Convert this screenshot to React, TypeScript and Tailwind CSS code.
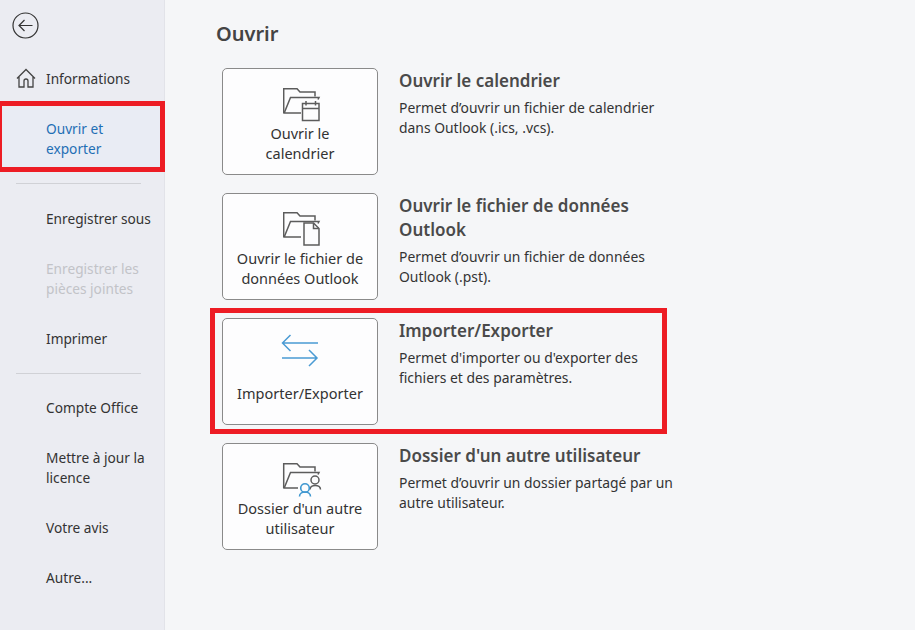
const FONT = "font-['Noto_Sans','Open_Sans',sans-serif]"

function FolderBase({ end = 18 }: { end?: number }) {
  return (
    <>
      <path d="M0.700 25V0.700H14L17 4H32V8.500" fill="none" stroke="#5c5c5c" strokeWidth="1.500" />
      <path d={`M${end} 25H1.200L7.500 9.500H36L35 11.500`} fill="none" stroke="#5c5c5c" strokeWidth="1.500" />
    </>
  )
}

function CalendarIcon() {
  return (
    <svg className="ml-[4px]" width="38" height="34" viewBox="0 0 38 34">
      <FolderBase />
      <rect x="19.500" y="15.500" width="16.500" height="17" fill="#fdfdfe" stroke="#5c5c5c" strokeWidth="1.500" />
      <path d="M19.500 20.500H36M23 13v4.500M32.500 13v4.500" fill="none" stroke="#5c5c5c" strokeWidth="1.500" />
    </svg>
  )
}

function FileIcon() {
  return (
    <svg className="-mt-px ml-[4px]" width="38" height="34" viewBox="0 0 38 34">
      <FolderBase />
      <path d="M21 11H30.500L36 16.500V33H21z" fill="#fdfdfe" stroke="#5c5c5c" strokeWidth="1.500" />
      <path d="M30.500 11V16.500H36" fill="none" stroke="#5c5c5c" strokeWidth="1.500" />
    </svg>
  )
}

function ArrowsIcon() {
  return (
    <svg className="overflow-visible ml-[2px]" width="38" height="34" viewBox="0 0 38 34">
      <path d="M0.500 5H36M8.500 -3L0.500 5L8.500 13" fill="none" stroke="#4a9bd4" strokeWidth="1.500" />
      <path d="M0 20H35M27 12L35 20L27 28" fill="none" stroke="#4a9bd4" strokeWidth="1.500" />
    </svg>
  )
}

function UsersIcon() {
  return (
    <svg className="overflow-visible ml-[4px]" width="38" height="34" viewBox="0 0 38 34">
      <FolderBase end={15} />
      <circle cx="32" cy="17" r="4" fill="#fdfdfe" stroke="#5c5c5c" strokeWidth="1.500" />
      <path d="M27 26.500c0-5.500 10.500-5.500 10.500 0" fill="none" stroke="#5c5c5c" strokeWidth="1.500" />
      <circle cx="22" cy="25" r="4.300" fill="#fdfdfe" stroke="#3f97d0" strokeWidth="1.600" />
      <path d="M16.500 33.500c0-6 11-6 11 0" fill="none" stroke="#3f97d0" strokeWidth="1.600" />
    </svg>
  )
}

function NavItem({ label, active, disabled, icon }: { label: string[]; active?: boolean; disabled?: boolean; icon?: boolean }) {
  const color = active ? "text-[#1f6fb5]" : disabled ? "text-[#c2c3c8]" : "text-[#333333]"
  return (
    <div className={`relative pl-[46px] py-[10px] text-[13.7px] leading-[20px] ${color} ${active ? "bg-[#e9ecf4]" : ""}`}>
      {icon && (
        <svg className="absolute left-[16px] top-[9px]" width="20" height="20" viewBox="0 0 20 20">
          <path d="M1 10.500L10 1.500l9 9M3 8.500V19h5v-6q0-2 2-2t2 2v6h5V8.500" fill="none" stroke="#444444" strokeWidth="1.300" />
        </svg>
      )}
      {label.map((l) => (
        <div key={l}>{l}</div>
      ))}
    </div>
  )
}

function Separator({ bottom }: { bottom: string }) {
  return <div className={`ml-[16px] w-[125px] h-px bg-[#d0d1d6] mt-[14px] ${bottom}`} />
}

function Row({ icon, button, title, desc }: { icon: React.ReactNode; button: string[]; title: string[]; desc: string[] }) {
  return (
    <div className="flex h-[107px]">
      <div className="w-[156px] h-[107px] shrink-0 rounded-[5px] border border-[#8a8a8a] bg-[#fdfdfe] flex flex-col items-center pt-[19px]">
        <div className="h-[34px]">{icon}</div>
        <div className={`text-[14.500px] leading-[20px] text-[#333333] text-center ${button.length === 1 ? "mt-[11px]" : "mt-[1px]"}`}>
          {button.map((b) => (
            <div key={b} className="whitespace-nowrap">{b}</div>
          ))}
        </div>
      </div>
      <div className="ml-[21px] pt-[1px]">
        <div className="text-[17px] leading-[24px] font-semibold text-[#4a4a4a]">
          {title.map((t) => (
            <div key={t}>{t}</div>
          ))}
        </div>
        <div className="mt-[5px] text-[13.900px] leading-[20px] text-[#333333]">
          {desc.map((d) => (
            <div key={d} className="whitespace-nowrap">{d}</div>
          ))}
        </div>
      </div>
    </div>
  )
}

export default function App() {
  return (
    <div className={`relative w-[915px] h-[630px] overflow-hidden flex bg-[#f5f6f8] ${FONT}`}>
      {/* Sidebar */}
      <div className="w-[165px] h-full shrink-0 bg-[#ebecf2] border-r border-[#e2e3e9]">
        <div className="pt-[12px] pl-[12px] h-[59px]">
          <svg width="27" height="27" viewBox="0 0 27 27">
            <circle cx="13.500" cy="13.500" r="12.500" fill="none" stroke="#333333" strokeWidth="1.200" />
            <path d="M20.500 13.500H7M12.500 8l-5.500 5.500 5.500 5.500" fill="none" stroke="#333333" strokeWidth="1.200" />
          </svg>
        </div>
        <div className="flex flex-col gap-[10px]">
          <NavItem label={["Informations"]} icon />
          <NavItem label={["Ouvrir et", "exporter"]} active />
        </div>
        <Separator bottom="mb-[15px]" />
        <div className="flex flex-col gap-[10px]">
          <NavItem label={["Enregistrer sous"]} />
          <NavItem label={["Enregistrer les", "pièces jointes"]} disabled />
          <NavItem label={["Imprimer"]} />
        </div>
        <Separator bottom="mb-[14px]" />
        <div className="flex flex-col gap-[10px]">
          <NavItem label={["Compte Office"]} />
          <NavItem label={["Mettre à jour la", "licence"]} />
          <NavItem label={["Votre avis"]} />
          <NavItem label={["Autre..."]} />
        </div>
      </div>

      {/* Main */}
      <div className="flex-1 pl-[51px]">
        <h1 className="text-[20px] leading-[28px] font-semibold text-[#444444] pt-[20px] h-[68px]">Ouvrir</h1>
        <div className="ml-[6px] flex flex-col gap-[18px]">
          <Row
            icon={<CalendarIcon />}
            button={["Ouvrir le", "calendrier"]}
            title={["Ouvrir le calendrier"]}
            desc={["Permet d’ouvrir un fichier de calendrier", "dans Outlook (.ics, .vcs)."]}
          />
          <Row
            icon={<FileIcon />}
            button={["Ouvrir le fichier de", "données Outlook"]}
            title={["Ouvrir le fichier de données", "Outlook"]}
            desc={["Permet d’ouvrir un fichier de données", "Outlook (.pst)."]}
          />
          <Row
            icon={<ArrowsIcon />}
            button={["Importer/Exporter"]}
            title={["Importer/Exporter"]}
            desc={["Permet d'importer ou d'exporter des", "fichiers et des paramètres."]}
          />
          <Row
            icon={<UsersIcon />}
            button={["Dossier d'un autre", "utilisateur"]}
            title={["Dossier d'un autre utilisateur"]}
            desc={["Permet d’ouvrir un dossier partagé par un", "autre utilisateur."]}
          />
        </div>
      </div>

      {/* Red annotation boxes */}
      <div className="absolute left-[-3px] top-[101px] w-[168px] h-[71px] border-[5px] border-[#ed1c24]" />
      <div className="absolute left-[210px] top-[308px] w-[457px] h-[126px] border-[5px] border-[#ed1c24]" />
    </div>
  )
}
